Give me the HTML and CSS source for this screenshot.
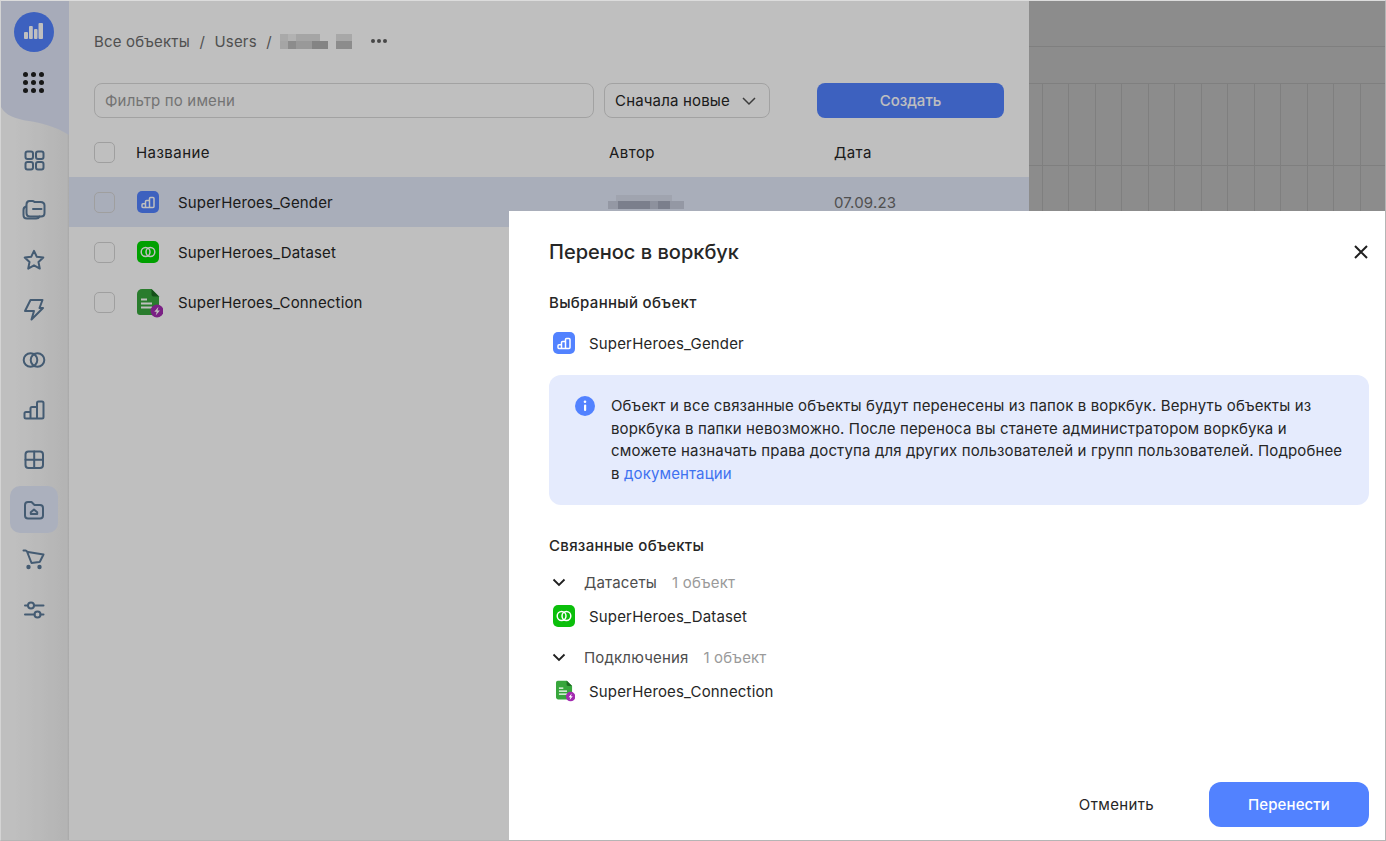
FILE: index.html
```html
<!DOCTYPE html>
<html lang="ru">
<head>
    <meta charset="UTF-8">
    <title>Перенос в воркбук</title>
    <link rel="stylesheet" href="styles.css">
</head>
<body>
    <svg class="sprite" width="0" height="0">
        <symbol id="i-bars" viewBox="0 0 22 22"><path d="M5 15.500v-1.800c0-.6.400-1 1-1h2.500v3.800H6c-.6 0-1-.4-1-1zM8.500 16.500v-6c0-.6.400-1 1-1h3v7zM12.500 16.500v-9c0-.6.400-1 1-1H16c.6 0 1 .4 1 1v8c0 .6-.4 1-1 1z" fill="none" stroke="#fff" stroke-width="1.500" stroke-linejoin="round"/></symbol>
        <symbol id="i-rings" viewBox="0 0 22 22"><circle cx="8.600" cy="11" r="4.400" fill="none" stroke="#fff" stroke-width="1.500"/><circle cx="13.400" cy="11" r="4.400" fill="none" stroke="#fff" stroke-width="1.500"/></symbol>
        <symbol id="i-file" viewBox="0 0 26 30">
            <path d="M3 0h11.500L22 7.500V23c0 1.700-1.300 3-3 3H3c-1.700 0-3-1.300-3-3V3c0-1.700 1.300-3 3-3z" fill="#37a63c"/>
            <path d="M14.500 0L22 7.500h-5.500c-1.100 0-2-.9-2-2z" fill="#1c6b22"/>
            <path d="M4 10.500h6M4 14.500h11M4 18.500h11" stroke="#fff" stroke-width="1.800" fill="none"/>
            <circle cx="20" cy="22" r="6.500" fill="#a32bb0"/>
            <path d="M21.500 17.800l-4.200 5h2.400l-1 3.700 4.200-5h-2.400z" fill="#fff"/>
        </symbol>
    </svg>

    <div class="app">
        <aside class="sidebar">
            <div class="side-top">
                <svg class="side-wave" width="68" height="136" viewBox="0 0 68 136"><path d="M0 0h68v134c-14-9-28-12-40-14C14 118 4 114 0 106z" fill="#dfe5f7"/></svg>
                <div class="logo">
                    <svg width="22" height="22" viewBox="0 0 22 22" fill="#fff"><rect x="1" y="11" width="4" height="7" rx="1"/><rect x="6" y="5" width="3.800" height="13" rx="1"/><rect x="11" y="8" width="3.500" height="10" rx="1"/><rect x="15.500" y="2" width="4.500" height="16" rx="1"/></svg>
                </div>
                <div class="apps">
                    <i></i><i></i><i></i><i></i><i></i><i></i><i></i><i></i><i></i>
                </div>
            </div>
            <nav class="side-nav">
                <a class="nav-item"><svg viewBox="0 0 24 24"><rect x="3.500" y="3.500" width="7.500" height="7.500" rx="2"/><rect x="14" y="3.500" width="7.500" height="7.500" rx="2"/><rect x="3.500" y="14" width="7.500" height="7.500" rx="2"/><rect x="14" y="14" width="7.500" height="7.500" rx="2"/></svg></a>
                <a class="nav-item"><svg viewBox="0 0 24 24"><path d="M4 8.500C2.300 9 1.500 10 1.500 12v5c0 2 1 3.500 3.500 3.500h9c1.800 0 3-.8 3.500-2"/><path d="M4.500 6.500c0-2 1-3.500 3-3.500h3c1 0 1.500.5 2 1h6c2.500 0 4 1.300 4 3.500v7.500c0 2-1.500 3.500-3.500 3.500H8c-2 0-3.500-1.500-3.500-3.500z"/><path d="M11 11h8.500"/></svg></a>
                <a class="nav-item"><svg viewBox="0 0 24 24"><path d="M12 2.800l2.800 6 6.500.8-4.800 4.500 1.300 6.500-5.800-3.300-5.800 3.300 1.300-6.500L2.700 9.600l6.500-.8z"/></svg></a>
                <a class="nav-item"><svg viewBox="0 0 24 24"><path d="M8.500 2h12l-3 8h3.500L9.500 21.500l2.500-8.500H3z"/></svg></a>
                <a class="nav-item"><svg viewBox="0 0 24 24"><circle cx="8.500" cy="12" r="6.800"/><circle cx="15.500" cy="12" r="6.800"/></svg></a>
                <a class="nav-item"><svg viewBox="0 0 24 24"><path d="M2.500 19v-3.500c0-1 .5-1.500 1.500-1.500h4.500v6.500H4c-1 0-1.500-.5-1.500-1.500zM8.500 20.500V10.500c0-1 .5-1.500 1.500-1.500h5v11.500zM15 20.500V5c0-1 .5-1.500 1.500-1.500H20c1 0 1.500.5 1.500 1.500v14c0 1-.5 1.500-1.500 1.500z"/></svg></a>
                <a class="nav-item"><svg viewBox="0 0 24 24"><rect x="3.500" y="3.500" width="17.500" height="16.500" rx="3"/><path d="M12.200 3.500v16.500M3.500 11.800h17.500"/></svg></a>
                <a class="nav-item active"><svg viewBox="0 0 24 24"><path d="M3 7c0-2 1-3 3-3h3.500l3 3H18c2 0 3 1 3 3v7.500c0 2-1 3-3 3H6c-2 0-3-1-3-3z"/><path d="M8.800 16h6.400v-1.800L12 11.500l-3.200 2.700z"/></svg></a>
                <a class="nav-item"><svg viewBox="0 0 24 24"><path d="M1.500 2.500h2c.7 0 1.200.4 1.500 1L9.500 15l7.500-1c.5-.1.900-.4 1.100-.8l3.400-6.700L6 4"/><circle cx="6.500" cy="19" r="1.200" fill="#5b7a99"/><circle cx="17.500" cy="19" r="1.200" fill="#5b7a99"/></svg></a>
                <a class="nav-item"><svg viewBox="0 0 24 24"><circle cx="9" cy="7.500" r="3"/><circle cx="15.500" cy="16.500" r="3"/><path d="M3 7.500h3M12 7.500h9.500M3 16.500h9.500M18.500 16.500h3"/></svg></a>
            </nav>
        </aside>

        <main class="main">
            <div class="crumbs">
                <span>Все объекты</span><span class="slash">/</span><span>Users</span><span class="slash">/</span>
                <span class="blur-name"></span>
                <span class="more"><i></i><i></i><i></i></span>
            </div>
            <div class="toolbar">
                <div class="filter">Фильтр по имени</div>
                <div class="sort">Сначала новые
                    <svg width="16" height="16" viewBox="0 0 16 16"><path d="M2 5l6 6 6-6" fill="none" stroke="#505050" stroke-width="1.500"/></svg>
                </div>
                <button class="create">Создать</button>
            </div>
            <div class="row head">
                <span class="check"></span><span class="c-name">Название</span><span>Автор</span><span>Дата</span>
            </div>
            <div class="row selected">
                <span class="check"></span>
                <span class="c-name"><svg class="obj blue" width="22" height="22"><use href="#i-bars"/></svg>SuperHeroes_Gender</span>
                <span><span class="blur-author"></span></span>
                <span class="date">07.09.23</span>
            </div>
            <div class="row">
                <span class="check"></span>
                <span class="c-name"><svg class="obj green" width="22" height="22"><use href="#i-rings"/></svg>SuperHeroes_Dataset</span>
            </div>
            <div class="row">
                <span class="check"></span>
                <span class="c-name"><svg class="obj obj-file" width="26" height="30"><use href="#i-file"/></svg>SuperHeroes_Connection</span>
            </div>
        </main>

        <div class="preview"></div>
        <div class="overlay"></div>

        <section class="modal">
            <header class="modal-head">
                <h2>Перенос в воркбук</h2>
                <svg class="close" width="16" height="16" viewBox="0 0 16 16"><path d="M2 2l12 12M14 2L2 14" stroke="#1f1f1f" stroke-width="2" fill="none"/></svg>
            </header>
            <h3 class="sub">Выбранный объект</h3>
            <div class="obj-line first"><svg class="m-icon blue" width="22" height="22"><use href="#i-bars"/></svg>SuperHeroes_Gender</div>
            <div class="note">
                <svg class="note-icon" width="20" height="20" viewBox="0 0 20 20"><circle cx="10" cy="10" r="10" fill="#5282ff"/><rect x="9" y="8.500" width="2.200" height="6.500" rx="1" fill="#fff"/><circle cx="10" cy="5.800" r="1.300" fill="#fff"/></svg>
                <p>Объект и все связанные объекты будут перенесены из папок в воркбук. Вернуть объекты из воркбука в папки невозможно. После переноса вы станете администратором воркбука и сможете назначать права доступа для других пользователей и групп пользователей. Подробнее в <a>документации</a></p>
            </div>
            <h3 class="sub linked">Связанные объекты</h3>
            <div class="group">
                <svg class="chev" width="16" height="16" viewBox="0 0 16 16"><path d="M2.500 5.500L8 11l5.500-5.500" fill="none" stroke="#1f1f1f" stroke-width="1.800"/></svg>
                <span>Датасеты</span><span class="count">1 объект</span>
            </div>
            <div class="obj-line"><svg class="m-icon green-m" width="22" height="22"><use href="#i-rings"/></svg>SuperHeroes_Dataset</div>
            <div class="group second">
                <svg class="chev" width="16" height="16" viewBox="0 0 16 16"><path d="M2.500 5.500L8 11l5.500-5.500" fill="none" stroke="#1f1f1f" stroke-width="1.800"/></svg>
                <span>Подключения</span><span class="count">1 объект</span>
            </div>
            <div class="obj-line"><span class="m-file"><svg width="20" height="23" viewBox="0 0 26 30"><use href="#i-file"/></svg></span>SuperHeroes_Connection</div>
            <footer class="modal-foot">
                <button class="cancel">Отменить</button>
                <button class="apply">Перенести</button>
            </footer>
        </section>
    </div>
</body>
</html>
```

FILE: styles.css
```css
* {
    box-sizing: border-box;
}

body {
    margin: 0;
    font-family: "Inter", "Noto Sans", sans-serif;
    font-size: 15px;
    letter-spacing: 0.17px;
    color: #262626;
}

.sprite {
    position: absolute;
}

.app {
    position: relative;
    display: flex;
    width: 1386px;
    height: 841px;
    overflow: hidden;
    background: #fff;
    border: 1px solid;
    border-color: #dcdcdc #b5b5b5 #b5b5b5 #d4d4d4;
}

/* Left menu */
.sidebar {
    position: relative;
    flex: none;
    width: 68px;
    background: linear-gradient(to right, #fff 20%, #f0f0f0 97%, #e2e2e2);
}

.side-top {
    position: relative;
    height: 119px;
    padding: 11px 0 0 13px;
}

.side-wave {
    position: absolute;
    top: 0;
    left: 0;
}

.logo {
    position: relative;
    display: flex;
    align-items: center;
    justify-content: center;
    width: 40px;
    height: 40px;
    border-radius: 50%;
    background: #5282ff;
}

.apps {
    position: relative;
    display: grid;
    grid-template-columns: repeat(3, 5px);
    gap: 3px;
    margin: 20px 0 0 9px;
}

.apps i {
    width: 5px;
    height: 5px;
    border-radius: 50%;
    background: #1f1f1f;
}

.side-nav {
    display: flex;
    flex-direction: column;
    padding: 16px 0 0 9px;
}

.nav-item {
    display: flex;
    align-items: center;
    justify-content: center;
    width: 48px;
    height: 47px;
    margin-bottom: 3px;
    border-radius: 10px;
}

.nav-item svg {
    width: 24px;
    height: 24px;
    fill: none;
    stroke: #5b7a99;
    stroke-width: 2;
    stroke-linejoin: round;
    stroke-linecap: round;
}

.nav-item.active {
    background: #e5ebfd;
}

/* Object list */
.main {
    flex: none;
    width: 960px;
}

.crumbs {
    display: flex;
    align-items: center;
    height: 24px;
    margin: 28px 0 0 25px;
    color: #6b6b6b;
}

.slash {
    margin: 0 9.500px;
}

.blur-name {
    width: 72px;
    height: 15px;
    margin-left: -1px;
    background:
        linear-gradient(to right, #e2e2e2 0 8px, #eee 8px 16px, #ddd 16px 40px, transparent 40px 56px, #e0e0e0 56px) top / 100% 7px no-repeat,
        linear-gradient(to right, #ddd 0 8px, #bbb 8px 16px, #ccc 16px 32px, #b0b0b0 32px 48px, transparent 48px 56px, #bbb 56px) bottom / 100% 8px no-repeat;
}

.more {
    display: flex;
    gap: 2px;
    margin-left: 19px;
}

.more i {
    width: 4px;
    height: 4px;
    border-radius: 50%;
    background: #5f5f5f;
}

.toolbar {
    display: flex;
    height: 35px;
    margin: 30px 0 0 25px;
}

.filter,
.sort {
    display: flex;
    align-items: center;
    border: 1px solid #d9d9d9;
    border-radius: 8px;
}

.filter {
    width: 500px;
    padding-left: 10px;
    color: #9a9a9a;
}

.sort {
    justify-content: space-between;
    width: 166px;
    margin-left: 10px;
    padding: 0 12px 0 10px;
}

.create {
    width: 187px;
    margin-left: 47px;
    border: none;
    border-radius: 8px;
    background: #5282ff;
    color: #fff;
    font: 500 15px "Inter", sans-serif;
}

.row {
    display: grid;
    grid-template-columns: 42px 473px 225px 1fr;
    align-items: center;
    height: 50px;
    padding-left: 25px;
}

.row.head {
    height: 48px;
    margin-top: 10px;
    margin-bottom: 1px;
    letter-spacing: 0.45px;
}

.row.selected {
    background: #e2e8f8;
}

.check {
    width: 21px;
    height: 21px;
    border: 1px solid #d4d4d4;
    border-radius: 5px;
}

.c-name {
    display: flex;
    align-items: center;
}

.obj {
    flex: none;
    margin: 0 19px 0 1px;
    border-radius: 5px;
}

.obj-file {
    margin: 3px 15px 0 1px;
}

.blue {
    background: #5282ff;
}

.green {
    background: #00d600;
}

.date {
    color: #6b6b6b;
}

.blur-author {
    display: block;
    width: 76px;
    height: 14px;
    margin-left: -1px;
    background:
        linear-gradient(to right, #c6cbdb 0 10px, #a4aabb 10px 42px, #bcc2d2 42px 50px, #a4aabb 50px 62px, #c6cbdb 62px) bottom / 100% 8px no-repeat,
        linear-gradient(to right, transparent 0 8px, #d6dbea 8px 64px, transparent 64px) top / 100% 6px no-repeat;
}

/* Report preview behind the list */
.preview {
    flex: 1;
    background-color: #bbb;
    background-image:
        linear-gradient(#aaa 1px, transparent 1px),
        linear-gradient(#aaa 1px, transparent 1px),
        linear-gradient(#aaa 1px, transparent 1px),
        repeating-linear-gradient(to right, transparent 0 13px, #aaa 13px 14px, transparent 14px 26.500px);
    background-position: 0 45px, 0 82px, 0 164px, 0 82px;
    background-repeat: no-repeat;
}

.overlay {
    position: absolute;
    inset: 0;
    background: rgba(0, 0, 0, 0.25);
}

/* Move dialog */
.modal {
    position: absolute;
    top: 210px;
    right: 0;
    bottom: 0;
    width: 876px;
    display: flex;
    flex-direction: column;
    padding: 0 16px 13px 40px;
    background: #fff;
}

.modal-head {
    display: flex;
    align-items: center;
    justify-content: space-between;
    height: 30px;
    margin-top: 26px;
}

.modal-head h2 {
    margin: 0;
    font-size: 20px;
    font-weight: 500;
    letter-spacing: 0;
}

.sub {
    margin: 0;
    font-size: 15px;
    font-weight: 500;
    line-height: 20px;
    letter-spacing: 0.3px;
}

.modal-head + .sub {
    margin-top: 26px;
}

.obj-line {
    display: flex;
    align-items: center;
    height: 24px;
    margin-top: 19px;
    padding-left: 4px;
}

.obj-line.first {
    margin-top: 18px;
}

.m-icon {
    flex: none;
    margin-right: 14px;
    border-radius: 5px;
}

.green-m {
    background: #0bbf0b;
}

.m-file {
    display: flex;
    flex: none;
    width: 22px;
    margin-right: 14px;
    padding-left: 3px;
}

.note {
    display: flex;
    margin-top: 20px;
    padding: 20px 24px 20px 26px;
    border-radius: 12px;
    background: #e5ebfd;
    letter-spacing: 0.13px;
}

.note-icon {
    flex: none;
    margin: 1px 16px 0 0;
}

.note p {
    margin: 0;
    line-height: 22.500px;
}

.note a {
    color: #3f72f0;
}

.sub.linked {
    margin-top: 31px;
}

.group {
    display: flex;
    align-items: center;
    height: 20px;
    margin-top: 16px;
    color: #4d4d4d;
}

.group.second {
    margin-top: 19px;
}

.group + .obj-line {
    margin-top: 12px;
}

.chev {
    flex: none;
    margin: 0 17px 0 2px;
}

.count {
    margin-left: 15px;
    color: #9a9a9a;
}

.modal-foot {
    display: flex;
    align-items: center;
    justify-content: flex-end;
    gap: 49px;
    margin-top: auto;
}

.cancel,
.apply {
    border: none;
    background: none;
    font: 15px "Inter", sans-serif;
    letter-spacing: 0.35px;
    color: #262626;
}

.apply {
    width: 160px;
    height: 45px;
    border-radius: 12px;
    background: #5282ff;
    color: #fff;
    font-weight: 500;
    letter-spacing: 0.1px;
}
```
